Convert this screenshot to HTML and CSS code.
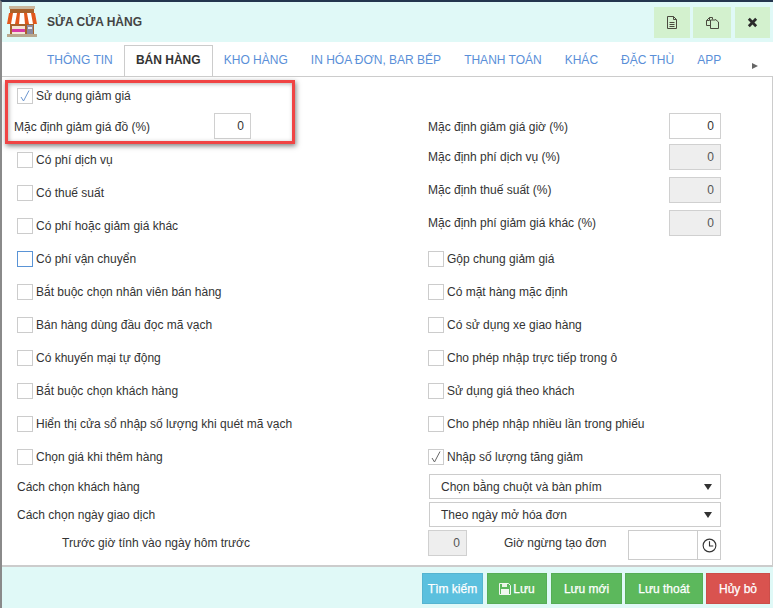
FILE: index.html
```html
<!DOCTYPE html>
<html lang="vi">
<head>
<meta charset="utf-8">
<title>Sửa cửa hàng</title>
<link rel="stylesheet" href="styles.css">
</head>
<body>
<div class="window">
  <header class="head">
    <svg class="logo" viewBox="0 0 32 32" width="32" height="32">
      <rect x="3" y="0" width="26" height="3" fill="#c9b79c"/>
      <rect x="4" y="3" width="24" height="25" fill="#a8622c"/>
      <rect x="1" y="28" width="30" height="3" fill="#b9a88f"/>
      <path d="M3 7h26l2 11H1z" fill="#fff"/>
      <path d="M3 7h4l-2 11H1zM11 7h3l-1 11H9zM18 7h3l2 11h-4zM25 7h4l2 11h-4z" fill="#e2581c"/>
      <rect x="6" y="20" width="13" height="8" fill="#f4e6d6"/>
      <rect x="6" y="23" width="13" height="3" fill="#d83aa5"/>
      <rect x="21" y="19" width="6" height="9" fill="#8a8aa0"/>
      <rect x="22" y="21" width="4" height="2" fill="#e6e6ee"/>
    </svg>
    <span class="title">SỬA CỬA HÀNG</span>
    <div class="head-tools">
      <button class="tool tool-a"><svg viewBox="0 0 12 13" width="12" height="13"><path d="M1.500.5h6l3 3v9h-9zM7.500.5v3h3M3.500 6.500h5M3.500 8.500h5M3.500 10.500h5" fill="none" stroke="#4b4b3f" stroke-width="1"/></svg></button>
      <button class="tool tool-b"><svg viewBox="0 0 13 13" width="13" height="13"><path d="M.5 4.500l3-3h3v2M3.500 1.500v3h-3v5h4M5 4h4.500v-.5l3 2.500v6.500h-8V4z" fill="none" stroke="#4b4b3f" stroke-width="1"/></svg></button>
      <button class="tool tool-c"><svg viewBox="0 0 12 12" width="11" height="11"><path d="M2 2l8 8M10 2l-8 8" stroke="#2b2b2b" stroke-width="3"/></svg></button>
    </div>
  </header>

  <nav class="tabs">
    <a class="tab">THÔNG TIN</a>
    <a class="tab active">BÁN HÀNG</a>
    <a class="tab">KHO HÀNG</a>
    <a class="tab">IN HÓA ĐƠN, BAR BẾP</a>
    <a class="tab">THANH TOÁN</a>
    <a class="tab">KHÁC</a>
    <a class="tab">ĐẶC THÙ</a>
    <a class="tab">APP</a>
    <span class="tab-more"></span>
  </nav>

  <main class="body">
    <div class="row row-first">
      <div class="left"><label class="check"><span class="box on"><svg viewBox="0 0 14 14" width="14" height="14"><path d="M3 8l2.500 4L11 1.500" fill="none" stroke="#6d97d0" stroke-width="1"/></svg></span>Sử dụng giảm giá</label></div>
    </div>
    <div class="row row-second">
      <div class="left left-input"><span class="second-label">Mặc định giảm giá đồ (%)</span><input class="num num-short" value="0"></div>
      <div class="right"><span class="second-label">Mặc định giảm giá giờ (%)</span><input class="num" value="0"></div>
    </div>
    <div class="row">
      <div class="left"><label class="check"><span class="box"></span>Có phí dịch vụ</label></div>
      <div class="right right-field"><span>Mặc định phí dịch vụ (%)</span><input class="num off" value="0"></div>
    </div>
    <div class="row">
      <div class="left"><label class="check"><span class="box"></span>Có thuế suất</label></div>
      <div class="right right-field"><span>Mặc định thuế suất (%)</span><input class="num off" value="0"></div>
    </div>
    <div class="row">
      <div class="left"><label class="check"><span class="box"></span>Có phí hoặc giảm giá khác</label></div>
      <div class="right right-field"><span>Mặc định phí giảm giá khác (%)</span><input class="num off" value="0"></div>
    </div>
    <div class="row">
      <div class="left"><label class="check"><span class="box focus"></span>Có phí vận chuyển</label></div>
      <div class="right"><label class="check"><span class="box"></span>Gộp chung giảm giá</label></div>
    </div>
    <div class="row">
      <div class="left"><label class="check"><span class="box"></span>Bắt buộc chọn nhân viên bán hàng</label></div>
      <div class="right"><label class="check"><span class="box"></span>Có mặt hàng mặc định</label></div>
    </div>
    <div class="row">
      <div class="left"><label class="check"><span class="box"></span>Bán hàng dùng đầu đọc mã vạch</label></div>
      <div class="right"><label class="check"><span class="box"></span>Có sử dụng xe giao hàng</label></div>
    </div>
    <div class="row">
      <div class="left"><label class="check"><span class="box"></span>Có khuyến mại tự động</label></div>
      <div class="right"><label class="check"><span class="box"></span>Cho phép nhập trực tiếp trong ô</label></div>
    </div>
    <div class="row">
      <div class="left"><label class="check"><span class="box"></span>Bắt buộc chọn khách hàng</label></div>
      <div class="right"><label class="check"><span class="box"></span>Sử dụng giá theo khách</label></div>
    </div>
    <div class="row">
      <div class="left"><label class="check"><span class="box"></span>Hiển thị cửa sổ nhập số lượng khi quét mã vạch</label></div>
      <div class="right"><label class="check"><span class="box"></span>Cho phép nhập nhiều lần trong phiếu</label></div>
    </div>
    <div class="row">
      <div class="left"><label class="check"><span class="box"></span>Chọn giá khi thêm hàng</label></div>
      <div class="right"><label class="check"><span class="box on"><svg viewBox="0 0 14 14" width="14" height="14"><path d="M3 8l2.500 4L11 1.500" fill="none" stroke="#666" stroke-width="1"/></svg></span>Nhập số lượng tăng giảm</label></div>
    </div>
    <div class="row row-select">
      <div class="left"><span class="plain">Cách chọn khách hàng</span></div>
      <div class="right right-select"><div class="select">Chọn bằng chuột và bàn phím<i class="caret"></i></div></div>
    </div>
    <div class="row row-select">
      <div class="left"><span class="plain">Cách chọn ngày giao dịch</span></div>
      <div class="right right-select"><div class="select">Theo ngày mở hóa đơn<i class="caret"></i></div></div>
    </div>
    <div class="row row-time">
      <div class="left"><span class="indent">Trước giờ tính vào ngày hôm trước</span></div>
      <div class="right right-time">
        <input class="num small off" value="0">
        <span class="time-label">Giờ ngừng tạo đơn</span>
        <div class="time">
          <input class="time-input">
          <span class="time-btn"><svg viewBox="0 0 16 16" width="15" height="15"><circle cx="8" cy="8" r="6.800" fill="none" stroke="#333" stroke-width="1.200"/><path d="M8 3.500V8.500H12" fill="none" stroke="#333" stroke-width="1.200"/></svg></span>
        </div>
      </div>
    </div>
    <div class="row row-cut">
      <div class="left"></div>
      <div class="right right-time"><input class="num small off"><input class="num off"></div>
    </div>
    <div class="callout"></div>
  </main>

  <footer class="foot">
    <button class="btn info b1">Tìm kiếm</button>
    <button class="btn ok b2"><svg viewBox="0 0 12 12" width="12" height="12"><path d="M.5.500h9l2 2v9H.5z" fill="none" stroke="#f0f7ee" stroke-width="1"/><path d="M3 1h5v3H3z" fill="#e8f4e4"/><path d="M2 6h8v5H2z" fill="#f0f7ee"/></svg>Lưu</button>
    <button class="btn ok b3">Lưu mới</button>
    <button class="btn ok b4">Lưu thoát</button>
    <button class="btn bad b5">Hủy bỏ</button>
  </footer>
</div>
</body>
</html>
```

FILE: styles.css
```css
* { box-sizing: border-box; }
html, body { margin: 0; padding: 0; }
body {
  width: 773px;
  height: 608px;
  overflow: hidden;
  font-family: "Liberation Sans", Arial, sans-serif;
  font-size: 12px;
  color: #333;
  background: #fff;
}
.window {
  height: 608px;
  display: flex;
  flex-direction: column;
  border-top: 2px solid #24364f;
  border-left: 2px solid #8a8a8a;
}
.head {
  height: 40px;
  flex: none;
  display: flex;
  align-items: center;
  background: #e0f9f7;
  padding-left: 4px;
}
.logo { flex: none; }
.title {
  margin-left: 9px;
  font-size: 12px;
  font-weight: 700;
  color: #444;
}
.head-tools {
  margin-left: auto;
  display: flex;
  align-items: flex-start;
  height: 31px;
  margin-right: 3px;
}
.tool {
  height: 31px;
  border: 0;
  padding: 0;
  background: #d3f1ce;
  display: flex;
  align-items: center;
  justify-content: center;
}
.tool-a { width: 36px; margin-right: 3px; }
.tool-b { width: 38px; margin-right: 4px; }
.tool-c { width: 35px; }
.tabs {
  height: 34px;
  flex: none;
  display: flex;
  align-items: flex-end;
  padding-left: 33px;
}
.tab {
  height: 31px;
  line-height: 29px;
  padding: 0 11px;
  margin-right: -1px;
  font-size: 12px;
  color: #5a8fd8;
  white-space: nowrap;
  border: 1px solid transparent;
  border-bottom: 0;
}
.tab.active {
  width: 89px;
  padding: 0;
  text-align: center;
  color: #333;
  font-weight: 700;
  border-color: #ccc;
  background: #fff;
}
.tab-more {
  margin: 0 15px 7px auto;
  width: 0;
  height: 0;
  flex: none;
  border-left: 6px solid #666;
  border-top: 3px solid transparent;
  border-bottom: 3px solid transparent;
}
.body {
  flex: 1;
  min-height: 0;
  overflow: hidden;
  position: relative;
  border-top: 1px solid #ccc;
  border-right: 1px solid #ccc;
  border-bottom: 2px solid #ccc;
  padding-top: 3px;
}
.row {
  height: 33px;
  display: flex;
  align-items: center;
}
.row-first { height: 31px; }
.row-second { height: 32px; align-items: flex-start; padding-top: 2px; }
.second-label { margin-top: 2px; }
.row-select { height: 28px; }
.row-time { height: 36px; align-items: flex-start; padding-top: 1px; }
.row-cut { height: 30px; align-items: flex-start; }
.left {
  width: 426px;
  flex: none;
  padding-left: 15px;
  white-space: nowrap;
}
.left-input {
  display: flex;
  align-items: center;
  padding-left: 12px;
}
.left-input .num { margin-left: auto; }
.right {
  width: 293px;
  flex: none;
  display: flex;
  align-items: center;
  justify-content: space-between;
  white-space: nowrap;
}
.right-field { align-self: flex-start; padding-top: 1px; }
.right-select { align-self: flex-start; padding-top: 1px; }
.check {
  display: flex;
  align-items: center;
  gap: 3px;
}
.box {
  width: 16px;
  height: 16px;
  flex: none;
  border: 1px solid #ccc;
  display: flex;
  align-items: center;
  justify-content: center;
  background: #fff;
}
.box.focus { border-color: #5a94d6; }
.num {
  width: 52px;
  height: 26px;
  border: 1px solid #d0d0d0;
  padding: 0 6px;
  text-align: right;
  font: inherit;
  color: #333;
  background: #fff;
  outline: 0;
}
.num-short { width: 37px; margin-right: 177px; }
.num.off { background: #eee; color: #555; }
.num.small { width: 39px; height: 26px; }
.plain { display: block; }
.select {
  width: 294px;
  height: 25px;
  margin-left: 1px;
  border: 1px solid #ccc;
  padding-left: 11px;
  line-height: 25px;
  position: relative;
  background: #fff;
}
.caret {
  position: absolute;
  right: 8px;
  top: 9px;
  width: 0;
  height: 0;
  border-top: 6px solid #333;
  border-left: 4px solid transparent;
  border-right: 4px solid transparent;
}
.indent { padding-left: 45px; line-height: 26px; }
.right-time { align-items: flex-start; }
.time-label { line-height: 26px; margin-left: 37px; }
.time { display: flex; height: 30px; margin-left: auto; }
.time-input {
  width: 69px;
  height: 30px;
  border: 1px solid #ccc;
  border-right: 0;
  outline: 0;
}
.time-btn {
  width: 24px;
  height: 30px;
  border: 1px solid #ccc;
  display: flex;
  align-items: center;
  justify-content: center;
}
.callout {
  position: absolute;
  left: 3px;
  top: 3px;
  width: 290px;
  height: 64px;
  border: 3px solid #f04444;
  box-shadow: 1px 2px 5px rgba(0, 0, 0, .5), inset 1px 1px 4px rgba(0, 0, 0, .3);
  pointer-events: none;
}
.foot {
  height: 41px;
  flex: none;
  background: #e0f9f7;
  display: flex;
  align-items: flex-start;
  padding: 6px 0 0 420px;
}
.btn {
  height: 31px;
  border: 1px solid rgba(0, 0, 0, .06);
  padding: 0;
  color: #fff;
  font-family: inherit;
  font-size: 12px;
  -webkit-text-stroke: .25px #fff;
  display: flex;
  align-items: center;
  justify-content: center;
  gap: 2px;
}
.info { background: #5bc0de; }
.ok { background: #5cb85c; }
.bad { background: #d9534f; }
.b1 { width: 61px; margin-right: 4px; }
.b2 { width: 60px; margin-right: 4px; }
.b3 { width: 71px; margin-right: 3px; }
.b4 { width: 78px; margin-right: 3px; }
.b5 { width: 64px; }
```
